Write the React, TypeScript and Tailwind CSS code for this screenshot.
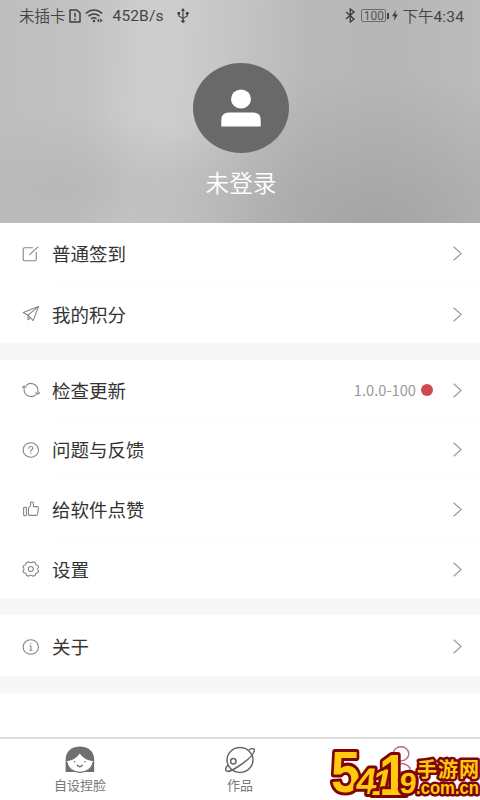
import React from 'react';
import { clsx } from 'clsx';

type IconProps = { children: React.ReactNode };

const LineIcon: React.FC<IconProps> = ({ children }) => (
  <svg
    width="18"
    height="18"
    viewBox="0 0 18 18"
    fill="none"
    stroke="#858585"
    strokeWidth="1.1"
    strokeLinecap="round"
    strokeLinejoin="round"
    className="shrink-0"
  >
    {children}
  </svg>
);

const icons = {
  checkin: (
    <LineIcon>
      <path d="M10.4 2.8H2.6Q1.2 2.8 1.2 4.2V14.4Q1.2 15.8 2.6 15.8H12.8Q14.2 15.8 14.2 14.4V7.4" />
      <path d="M7.6 9.6L16 1.8" />
    </LineIcon>
  ),
  points: (
    <LineIcon>
      <path d="M16.4 1.6L1.2 7.6L6 10.2L11.2 15.6Z" />
      <path d="M16.4 1.6L6 10.2V14.8L8.4 12.8" />
    </LineIcon>
  ),
  update: (
    <LineIcon>
      <path d="M4.2 4.4A6.9 6.9 0 0 1 15.9 9V12.6M13.8 13.6A6.9 6.9 0 0 1 2.1 9V5.4" />
      <path d="M0.4 6.4L2.1 5L4.2 6.4M13.8 11.8L15.9 13.2L17.6 11.6" />
    </LineIcon>
  ),
  help: (
    <LineIcon>
      <ellipse cx="8.8" cy="9" rx="7.7" ry="7.2" />
      <path d="M6.8 7.3Q6.8 5.5 8.8 5.5T10.8 7.2Q10.8 8.2 9.6 8.8Q8.8 9.3 8.8 10.4M8.8 12.4V12.5" />
    </LineIcon>
  ),
  like: (
    <LineIcon>
      <path d="M1.6 8.2Q1.6 7.4 2.4 7.4H3.6Q4.4 7.4 4.4 8.2V14.8Q4.4 15.6 3.6 15.6H2.4Q1.6 15.6 1.6 14.8Z" />
      <path d="M6.4 8L8.6 5.6V3Q8.6 1.8 9.8 1.8Q11.4 2 11.4 4V6.6H15Q16.6 6.6 16.4 8.2L15.6 14Q15.4 15.4 13.8 15.4H7.4Q6.4 15.4 6.4 14.4Z" />
    </LineIcon>
  ),
  settings: (
    <LineIcon>
      <path d="M6.5 1.8Q8.8 3.6 11.1 1.8L13.3 2.8Q13.2 5.3 15.8 5.4L16.6 7.4Q14.6 9 16.6 10.8L15.8 12.8Q13.2 12.7 13.3 15.2L11.1 16.2Q8.8 14.4 6.5 16.2L4.3 15.2Q4.4 12.7 1.8 12.8L1 10.8Q3 9 1 7.4L1.8 5.4Q4.4 5.3 4.3 2.8Z" />
      <circle cx="8.8" cy="9" r="2.5" />
    </LineIcon>
  ),
  about: (
    <LineIcon>
      <ellipse cx="8.8" cy="9" rx="7.7" ry="7.2" />
      <path d="M8 7.8H8.9V12.2M7.8 12.3H10M8.8 5.4V5.5" />
    </LineIcon>
  ),
};

const groups = [
  {
    id: 'account',
    height: 'h-[120px]',
    rows: [
      { label: '普通签到', icon: icons.checkin },
      { label: '我的积分', icon: icons.points },
    ],
  },
  {
    id: 'app',
    height: 'h-[238px]',
    rows: [
      { label: '检查更新', icon: icons.update, value: '1.0.0-100' },
      { label: '问题与反馈', icon: icons.help },
      { label: '给软件点赞', icon: icons.like },
      { label: '设置', icon: icons.settings },
    ],
  },
  {
    id: 'about',
    height: 'h-[61px]',
    rows: [{ label: '关于', icon: icons.about }],
  },
];

const StatusBar: React.FC = () => (
  <div className="flex h-[31px] items-center justify-between pl-[19px] pr-[16px] text-[15.5px] font-[350] leading-[31px] text-[#444]">
    <div className="flex items-center">
      <span>未插卡</span>
      <svg width="12" height="14" viewBox="0 0 12 14" fill="none" stroke="#3f3f3f" strokeWidth="1.5" className="ml-[3px]">
        <path d="M1 1H8L11 4V13H1Z" strokeLinejoin="round" />
        <path d="M6 3.8V8M6 9.6V11.2" />
      </svg>
      <svg width="19" height="14" viewBox="0 0 19 14" fill="none" stroke="#3f3f3f" strokeWidth="1.5" className="ml-1">
        <path d="M0.8 4.3Q9 -2.3 17.2 4.3M3.5 7.2Q9 2.8 14.5 7.2M6.2 9.8Q9 7.6 11.6 9.8" />
        <circle cx="9" cy="12" r="1.3" fill="#3f3f3f" stroke="none" />
        <path d="M14.2 9.6L12 11.6L14.2 13.6ZM15.2 9.6L17.6 11.6L15.2 13.6Z" fill="#3f3f3f" stroke="none" />
      </svg>
      <span className="ml-[9px] pt-px font-[Roboto] font-normal tracking-[0.15px]">452B/s</span>
      <svg width="12" height="15" viewBox="0 0 12 15" fill="none" stroke="#3f3f3f" strokeWidth="1.1" className="ml-[13px]">
        <path d="M6 2V13M1.8 5V8L6 10.4L10.2 8V5" />
        <path d="M6 0L8 3H4ZM0.5 4H3.1V6.6H0.5Z" fill="#3f3f3f" stroke="none" />
        <circle cx="10.2" cy="5.3" r="1.5" fill="#3f3f3f" stroke="none" />
        <circle cx="6" cy="13.2" r="1.6" fill="#3f3f3f" stroke="none" />
      </svg>
    </div>
    <div className="flex items-center">
      <svg width="11" height="15" viewBox="0 0 11 15" fill="none" stroke="#3f3f3f" strokeWidth="1.4">
        <path d="M1 4L9 11L5.3 14V1L9 4L1 11" />
      </svg>
      <span className="ml-[5px] flex h-[13px] w-[25px] items-center justify-center rounded-[2px] border border-[#6e6e6e] font-[Roboto] text-[12px] font-normal leading-none text-[#555]">
        100
      </span>
      <span className="ml-px h-[6px] w-[2px] bg-[#444]" />
      <svg width="6" height="11" viewBox="0 0 6 11" className="ml-[3px]">
        <path d="M4 0L0 6.2H2.7L1.8 11L6 4.4H3.3Z" fill="#3f3f3f" />
      </svg>
      <span className="ml-[4px] pt-px">
        下午<span className="font-[Roboto] font-normal tracking-[0.15px]">4:34</span>
      </span>
    </div>
  </div>
);

const Profile: React.FC = () => (
  <div className="flex flex-col items-center pl-[2px] pt-[32px]">
    <div className="flex h-[90px] w-[96px] items-center justify-center rounded-[50%] bg-[#696969]">
      <svg width="40" height="38" viewBox="0 0 40 38" fill="#fff">
        <ellipse cx="20" cy="10" rx="10" ry="9.6" />
        <path d="M0.3 37.5V31Q0.3 23.5 8 23.5H32Q39.7 23.5 39.7 31V37.5Z" />
      </svg>
    </div>
    <p className="mt-[11px] text-[23.7px] font-[350] leading-9 text-white">未登录</p>
  </div>
);

const FaceIcon: React.FC = () => (
  <svg width="30" height="28" viewBox="0 0 30 28">
    <path d="M0.6 26V13.5C0.6 -3.8 29.2 -3.8 29.2 13.5V26Z" fill="#6f6f6f" />
    <path d="M1.8 15.2Q11 13.8 14.8 7.5Q18.5 13.8 28.2 15.2C27.5 30.5 2.5 30.5 1.8 15.2Z" fill="#fff" />
    <path d="M2 16C3.5 29.8 26.5 29.8 28 16" fill="none" stroke="#6f6f6f" strokeWidth="1.2" />
    <path d="M9.6 15.8V15.9M20 15.8V15.9M12.3 19.3Q14.8 22.2 17.3 19.3" fill="none" stroke="#6f6f6f" strokeWidth="1.4" strokeLinecap="round" />
  </svg>
);

const PlanetIcon: React.FC = () => (
  <svg width="30" height="28" viewBox="0 0 30 28" fill="none" stroke="#666" strokeWidth="1.5">
    <ellipse cx="15" cy="14" rx="13" ry="12.4" />
    <circle cx="8.3" cy="15.2" r="2.7" />
    <path d="M23.8 4Q27 1.4 29 3C32 9 6 27.5 1.6 25.2Q-0.6 23 2.8 19.3" />
  </svg>
);

const MineIcon: React.FC = () => (
  <svg width="24" height="28" viewBox="0 0 24 28" fill="none" stroke="#b66c83" strokeWidth="1.4">
    <ellipse cx="13" cy="7.8" rx="7.8" ry="7.1" />
    <path d="M3 26Q3 17.5 12 17.5Q19 17.5 22 22V26Z" />
  </svg>
);

const tabs = [
  { label: '自设捏脸', icon: <FaceIcon /> },
  { label: '作品', icon: <PlanetIcon /> },
  { label: '', icon: <MineIcon /> },
];

const SiteMark: React.FC = () => (
  <svg
    width="154"
    height="58"
    viewBox="326 742 154 58"
    fill="#ffc90e"
    stroke="#7d0505"
    strokeWidth="6"
    strokeLinejoin="round"
    paintOrder="stroke"
    className="absolute bottom-0 right-0 overflow-visible font-['Liberation_Sans',sans-serif] font-bold"
  >
    <text transform="translate(331 792) scale(0.92 1)" fontSize="57">5</text>
    <text transform="translate(355 794) skewX(-6)" fontSize="37">4</text>
    <text transform="translate(370 795) skewX(-12) scale(0.95 1)" fontSize="37">1</text>
    <text transform="translate(379 795) scale(0.9 1)" fontSize="57">1</text>
    <text transform="translate(399 793) skewX(-4) scale(1.05 1)" fontSize="29">9</text>
    <text x="417" y="777" fontSize="20" strokeWidth="5" textLength="62" className="font-['Noto_Sans_CJK_SC',sans-serif]">
      手游网
    </text>
    <text x="416" y="794" fontSize="19" strokeWidth="5" textLength="63" lengthAdjust="spacingAndGlyphs">
      .com.cn
    </text>
  </svg>
);

const App: React.FC = () => {
  return (
    <div className="relative flex h-[800px] w-[480px] flex-col overflow-hidden bg-white font-['Noto_Sans_CJK_SC',sans-serif]">
      <header className="h-[223px] shrink-0 bg-[radial-gradient(ellipse_at_78%_100%,#a5a5a5_0%,#a5a5a500_48%),radial-gradient(ellipse_at_12%_85%,#b8b8b8_0%,#b8b8b800_30%),linear-gradient(92deg,#bebebe_0%,#c2c2c2_18%,#cccccc_28%,#cdcdcd_36%,#c5c5c5_48%,#b9b9b9_63%,#b6b6b6_80%,#bcbcbc_100%)]">
        <StatusBar />
        <Profile />
      </header>

      <main className="flex flex-1 flex-col gap-[17px] bg-[#f7f7f7]">
        {groups.map((group) => (
          <section key={group.id} className={clsx('flex flex-col bg-white', group.height)}>
            {group.rows.map((row, i) => (
              <div key={row.label} className="flex flex-1 flex-col">
                <div className="flex flex-1 items-center pl-[22px] pr-[18px] pt-[2px]">
                  {row.icon}
                  <span className="-mt-px ml-[12px] text-[18.5px] leading-7 text-[#333]">{row.label}</span>
                  <div className="ml-auto flex items-center">
                    {'value' in row && (
                      <>
                        <span className="text-[14.7px] leading-6 text-[#999]">{row.value}</span>
                        <span className="ml-[5px] mr-[20px] h-[12px] w-[12px] rounded-full bg-[#d0494f]" />
                      </>
                    )}
                    <svg width="9" height="15" viewBox="0 0 9 15" fill="none" stroke="#999" strokeWidth="1.2">
                      <path d="M0.6 0.8L8.2 7.5L0.6 14.2" />
                    </svg>
                  </div>
                </div>
                {i < group.rows.length - 1 && <div className="ml-[50px] h-px bg-[#fbfbfb]" />}
              </div>
            ))}
          </section>
        ))}
        <div className="flex-1 bg-white" />
      </main>

      <nav className="grid h-[63px] shrink-0 grid-cols-3 border-t-2 border-[#dedede] bg-white">
        {tabs.map((tab, i) => (
          <div key={i} className="flex flex-col items-center pt-[7px]">
            {tab.icon}
            <span className="mt-px text-[13px] leading-5 text-[#777]">{tab.label}</span>
          </div>
        ))}
      </nav>
      <SiteMark />
    </div>
  );
};

export default App;
